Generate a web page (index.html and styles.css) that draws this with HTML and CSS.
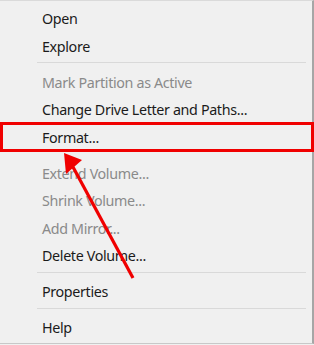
FILE: index.html
```html
<!DOCTYPE html>
<html lang="en">
<head>
<meta charset="utf-8">
<title>Disk context menu</title>
<link rel="stylesheet" href="styles.css">
</head>
<body>
<ul class="menu">
<li class="item">Open</li>
<li class="item">Explore</li>
<li class="sep"></li>
<li class="item off">Mark Partition as Active</li>
<li class="item">Change Drive Letter and Paths...</li>
<li class="item">Format...</li>
<li class="gap"></li>
<li class="item off">Extend Volume...</li>
<li class="item off">Shrink Volume...</li>
<li class="item off">Add Mirror...</li>
<li class="item">Delete Volume...</li>
<li class="sep"></li>
<li class="item">Properties</li>
<li class="sep"></li>
<li class="item">Help</li>
</ul>
<div class="mark"></div>
<svg class="arrow" width="314" height="345" viewBox="0 0 314 345">
<line x1="133" y1="278" x2="73" y2="167" stroke="#f00000" stroke-width="3.2"/>
<polygon points="64,153 82,160 66,174" fill="#f00000"/>
</svg>
</body>
</html>
```
FILE: styles.css
```css
html,body{margin:0;padding:0;}
body{background:#f0f0f0;width:314px;height:345px;overflow:hidden;position:relative;
font-family:"Noto Sans","Open Sans",sans-serif;font-size:14.3px;letter-spacing:-0.35px;color:#1b1b1b;}
.menu{list-style:none;margin:0;padding:4px 0 0 0;box-sizing:border-box;width:314px;height:344px;
border-top:1px solid #dadada;border-right:2px solid #a6a6a6;border-bottom:1px solid #c8c8c8;}
.item{height:27.5px;line-height:27.5px;padding-left:42px;white-space:nowrap;}
.off{color:#8a8a8a;}
.sep{height:8.5px;box-sizing:border-box;padding-top:2px;margin:0 6px 0 37px;}
.sep::before{content:"";display:block;height:1px;background:#d9d9d9;}
.gap{height:8.5px;}
.mark{position:absolute;left:0;top:122px;width:314px;height:30px;box-sizing:border-box;border:3px solid #f00000;}
.arrow{position:absolute;left:0;top:0;}
```
